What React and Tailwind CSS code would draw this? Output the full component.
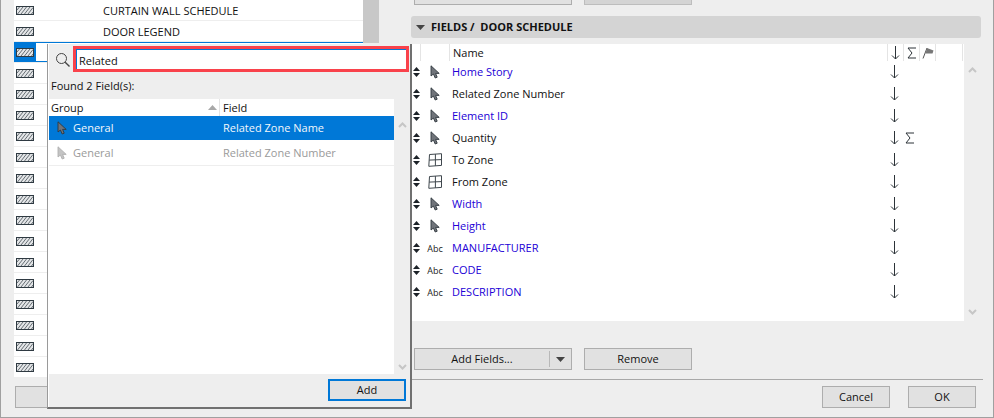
import React from "react";

const font = { fontFamily: '"Open Sans", "Noto Sans", sans-serif' };

const fields = [
  { icon: "cursor", name: "Home Story", blue: true },
  { icon: "cursor", name: "Related Zone Number" },
  { icon: "cursor", name: "Element ID", blue: true },
  { icon: "cursor", name: "Quantity", sum: true },
  { icon: "zone", name: "To Zone" },
  { icon: "zone", name: "From Zone" },
  { icon: "cursor", name: "Width", blue: true },
  { icon: "cursor", name: "Height", blue: true },
  { icon: "abc", name: "MANUFACTURER", blue: true },
  { icon: "abc", name: "CODE", blue: true },
  { icon: "abc", name: "DESCRIPTION", blue: true },
];

const leftRows = [
  "CURTAIN WALL SCHEDULE",
  "DOOR LEGEND",
  "",
  ...Array(15).fill(""),
];

function Hatch() {
  return (
    <svg width="18" height="9" viewBox="0 0 18 9" className="block">
      <rect x="0.5" y="0.5" width="17" height="8" fill="#e4e6e8" stroke="#2f3a42" />
      <path
        d="M1 4 L3.5 1 M1.5 8 L7 1 M5 8 L10.5 1 M8.5 8 L14 1 M12 8 L17 1.5 M15.5 8 L17 6"
        stroke="#666e74"
        strokeWidth="1"
        fill="none"
      />
    </svg>
  );
}

function CursorIcon({ light }) {
  return (
    <svg width="10" height="14" viewBox="0 0 10 14" className="block">
      <path
        d="M1 .8V11L3.4 9 5.2 13 7.2 12.2 5.6 8.4H9.2Z"
        fill={light ? "#c4c4c4" : "#70747a"}
        stroke={light ? "#b0b0b0" : "#30383e"}
        strokeWidth="0.9"
        strokeLinejoin="round"
      />
    </svg>
  );
}

function ZoneIcon() {
  return (
    <svg width="14" height="14" viewBox="0 0 14 14" className="block">
      <path
        d="M1.5 1.5L13.5 .7V12.4L.8 13.3ZM7.4 1.1V12.8M1.2 7.1L13.5 6.6"
        fill="none"
        stroke="#3f474d"
        strokeWidth="1"
      />
    </svg>
  );
}

function SortArrows() {
  return (
    <svg width="7" height="10" viewBox="0 0 7 10" className="block">
      <path d="M3.5 0L7 4H0ZM0 6H7L3.5 10Z" fill="#1c2228" />
      <path d="M0 5H7" stroke="#ffffff" strokeWidth="1" />
    </svg>
  );
}

function DownArrow() {
  return (
    <svg width="9" height="14" viewBox="0 0 9 14" className="block">
      <path d="M4.5 0V13M1 9.5L4.5 13L8 9.5" fill="none" stroke="#2c3338" strokeWidth="1" />
    </svg>
  );
}

function Sigma() {
  return (
    <svg width="10" height="12" viewBox="0 0 10 12" className="block">
      <path d="M9 1H1L5 6L1 11H9" fill="none" stroke="#2c3338" strokeWidth="1" />
    </svg>
  );
}

function Flag() {
  return (
    <svg width="12" height="12" viewBox="0 0 12 12" className="block">
      <path d="M1 11.5L5 1" stroke="#555" strokeWidth="1" />
      <path d="M5 1L11.5 3.5L10.5 6.5L3.5 6.5Z" fill="#777" />
    </svg>
  );
}

function Chevron({ down }) {
  return (
    <svg width="9" height="6" viewBox="0 0 9 6" className="block">
      <path d={down ? "M1 1L4.5 4.5L8 1" : "M1 5L4.5 1.5L8 5"} fill="none" stroke="#c6c6c6" strokeWidth="2" />
    </svg>
  );
}

function Button({ children, className = "" }) {
  return (
    <div
      className={
        "flex items-center justify-center h-[22px] bg-[#e1e1e1] border border-[#adadad] text-[11px] text-[#111] " +
        className
      }
    >
      {children}
    </div>
  );
}

function FieldRow({ field }) {
  return (
    <div className="flex items-center h-[22px] text-[11px]">
      <div className="w-[9px] ml-[1px] mr-[3px] flex justify-center">
        <SortArrows />
      </div>
      <div className="w-[22px] flex justify-center">
        {field.icon === "cursor" && <CursorIcon />}
        {field.icon === "zone" && <ZoneIcon />}
        {field.icon === "abc" && <span className="text-[9px] leading-none text-[#222]">Abc</span>}
      </div>
      <div className={"w-[440px] pl-[6px] " + (field.blue ? "text-[#2200d6]" : "text-[#111]")}>
        {field.name}
      </div>
      <div className="w-[16px] flex justify-center">
        <DownArrow />
      </div>
      <div className="w-[16px] flex justify-center">{field.sum && <Sigma />}</div>
    </div>
  );
}

function SearchPopup() {
  return (
    <div className="absolute left-[46px] top-[44px] w-[365px] h-[365px] bg-[#eeeeee] border-l border-[#9a9a9a] border-r-2 border-b-2 border-r-[#707070] border-b-[#707070] text-[11px]">
      <div className="h-full border-l border-white flex flex-col">
        {/* search box */}
        <div className="flex items-start h-[30px] pt-[2px]">
          <svg width="16" height="16" viewBox="0 0 16 16" className="mt-[6px] ml-[6px] mr-[2px]">
            <circle cx="6.5" cy="6.5" r="5" fill="none" stroke="#444" strokeWidth="1" />
            <path d="M10.2 10.2L14.5 14.5" stroke="#444" strokeWidth="1.4" />
          </svg>
          <div className="w-[336px] h-[26px] border-[3px] border-[#f9424b] bg-white">
            <div className="h-full border-t border-l border-[#0078d7] pl-[2px] pt-[2px] leading-[17px] text-[#111]">
              Related
            </div>
          </div>
        </div>
        <div className="h-[25px] pl-[2px] pt-[4px] text-[#111]">Found 2 Field(s):</div>
        {/* results table */}
        <div className="flex flex-1">
          <div className="w-[345px] flex flex-col bg-white">
            <div className="flex h-[17px] text-[#111] leading-[18px]">
              <div className="w-[171px] pl-[2px] flex items-center justify-between pr-[2px] border-r border-[#e4e4e4]">
                <span>Group</span>
                <svg width="9" height="5" viewBox="0 0 9 5">
                  <path d="M4.5 0L9 5H0Z" fill="#a8a8a8" />
                </svg>
              </div>
              <div className="pl-[3px]">Field</div>
            </div>
            <div className="flex items-center h-[24px] bg-[#0078d7] text-[#f2f7fb]">
              <div className="w-[24px] flex justify-center pl-[2px]">
                <CursorIcon />
              </div>
              <div className="w-[150px]">General</div>
              <div>Related Zone Name</div>
            </div>
            <div className="flex items-center h-[25px] mt-[1px] border-b border-[#eeeeee] text-[#9a9a9a]">
              <div className="w-[24px] flex justify-center pl-[2px]">
                <CursorIcon light />
              </div>
              <div className="w-[150px]">General</div>
              <div>Related Zone Number</div>
            </div>
          </div>
          <div className="flex-1 flex flex-col justify-between items-center pt-[23px] pb-[4px]">
            <Chevron />
            <Chevron down />
          </div>
        </div>
        <div className="h-[33px] flex justify-end items-start pt-[5px] pr-[4px]">
          <div className="w-[78px] h-[22px] flex items-center justify-center bg-[#e1e1e1] border-2 border-[#0078d7] text-[#111]">
            Add
          </div>
        </div>
      </div>
    </div>
  );
}

export default function App() {
  return (
    <div
      style={font}
      className="relative w-[994px] h-[418px] overflow-hidden flex bg-[#eeeeee] border-l border-r border-b border-[#a0a0a0]"
    >
      {/* Left: schedule list */}
      <div className="w-[410px] shrink-0 pl-[13px] flex flex-col">
        <div className="flex h-[378px]">
          <div className="w-[349px] bg-white">
            {leftRows.map((name, i) => (
              <div key={i} className="flex h-[21px] border-b border-[#eeeeee] text-[11px] text-[#111]">
                <div className={"w-[22px] flex items-center justify-center " + (i === 2 ? "bg-[#0078d7]" : "")}>
                  <Hatch />
                </div>
                <div className={"flex-1 pl-[67px] pt-[1px] leading-[20px] " + (i === 2 ? "border-y border-[#0078d7]" : "")}>
                  {name}
                </div>
              </div>
            ))}
          </div>
          <div className="w-[16px] h-[43px] bg-[#c8c8c8]"></div>
        </div>
        <Button className="w-[100px] mt-[8px] ml-[1px]"></Button>
      </div>

      {/* Right: fields panel */}
      <div className="w-[582px] flex flex-col">
        <div className="flex gap-[12px] h-[5px] pl-[3px] items-end">
          <div className="w-[158px] h-[5px] bg-[#e1e1e1] border-b border-x border-[#adadad]"></div>
          <div className="w-[108px] h-[5px] bg-[#d4d4d4] border-b border-x border-[#bdbdbd]"></div>
        </div>
        <div className="mt-[11px] w-[570px] h-[22px] flex items-center bg-[#d4d4d4] rounded-[3px] text-[11px] font-bold text-[#111]">
          <svg width="9" height="5" viewBox="0 0 9 5" className="ml-[5px] mr-[6px]">
            <path d="M0 0H9L4.5 5Z" fill="#444" />
          </svg>
          FIELDS /&nbsp; DOOR SCHEDULE
        </div>
        <div className="mt-[6px] flex h-[277px]">
          <div className="w-[553px] bg-white">
            <div className="flex h-[17px] text-[11px] text-[#111] leading-[18px]">
              <div className="w-[9px]"></div>
              <div className="w-[30px] border-l border-r border-[#e4e4e4]"></div>
              <div className="w-[438px] pl-[3px] border-r border-[#e4e4e4]">Name</div>
              <div className="w-[16px] flex justify-center items-center border-r border-[#e4e4e4]">
                <DownArrow />
              </div>
              <div className="w-[16px] flex justify-center items-center border-r border-[#e4e4e4]">
                <Sigma />
              </div>
              <div className="w-[16px] flex justify-center items-center border-r border-[#e4e4e4]">
                <Flag />
              </div>
              <div className="w-[27px] border-r border-[#e4e4e4]"></div>
            </div>
            {fields.map((f) => (
              <FieldRow key={f.name} field={f} />
            ))}
          </div>
          <div className="w-[16px] flex flex-col justify-between items-center pt-[23px] pb-[6px]">
            <Chevron />
            <Chevron down />
          </div>
        </div>
        <div className="mt-[27px] pl-[3px] flex gap-[12px]">
          <Button className="w-[158px]">
            <span className="flex-1 text-center">Add Fields...</span>
            <span className="w-px h-[16px] bg-[#b8b8b8]"></span>
            <span className="w-[21px] flex justify-center">
              <svg width="9" height="5" viewBox="0 0 9 5">
                <path d="M0 0H9L4.5 5Z" fill="#444" />
              </svg>
            </span>
          </Button>
          <Button className="w-[108px]">Remove</Button>
        </div>
        <div className="mt-[9px] w-[572px] border-t border-[#a8a8a8]"></div>
        <div className="mt-[6px] w-[565px] flex justify-end gap-[18px]">
          <Button className="w-[68px]">Cancel</Button>
          <Button className="w-[68px]">OK</Button>
        </div>
      </div>

      <SearchPopup />
    </div>
  );
}
